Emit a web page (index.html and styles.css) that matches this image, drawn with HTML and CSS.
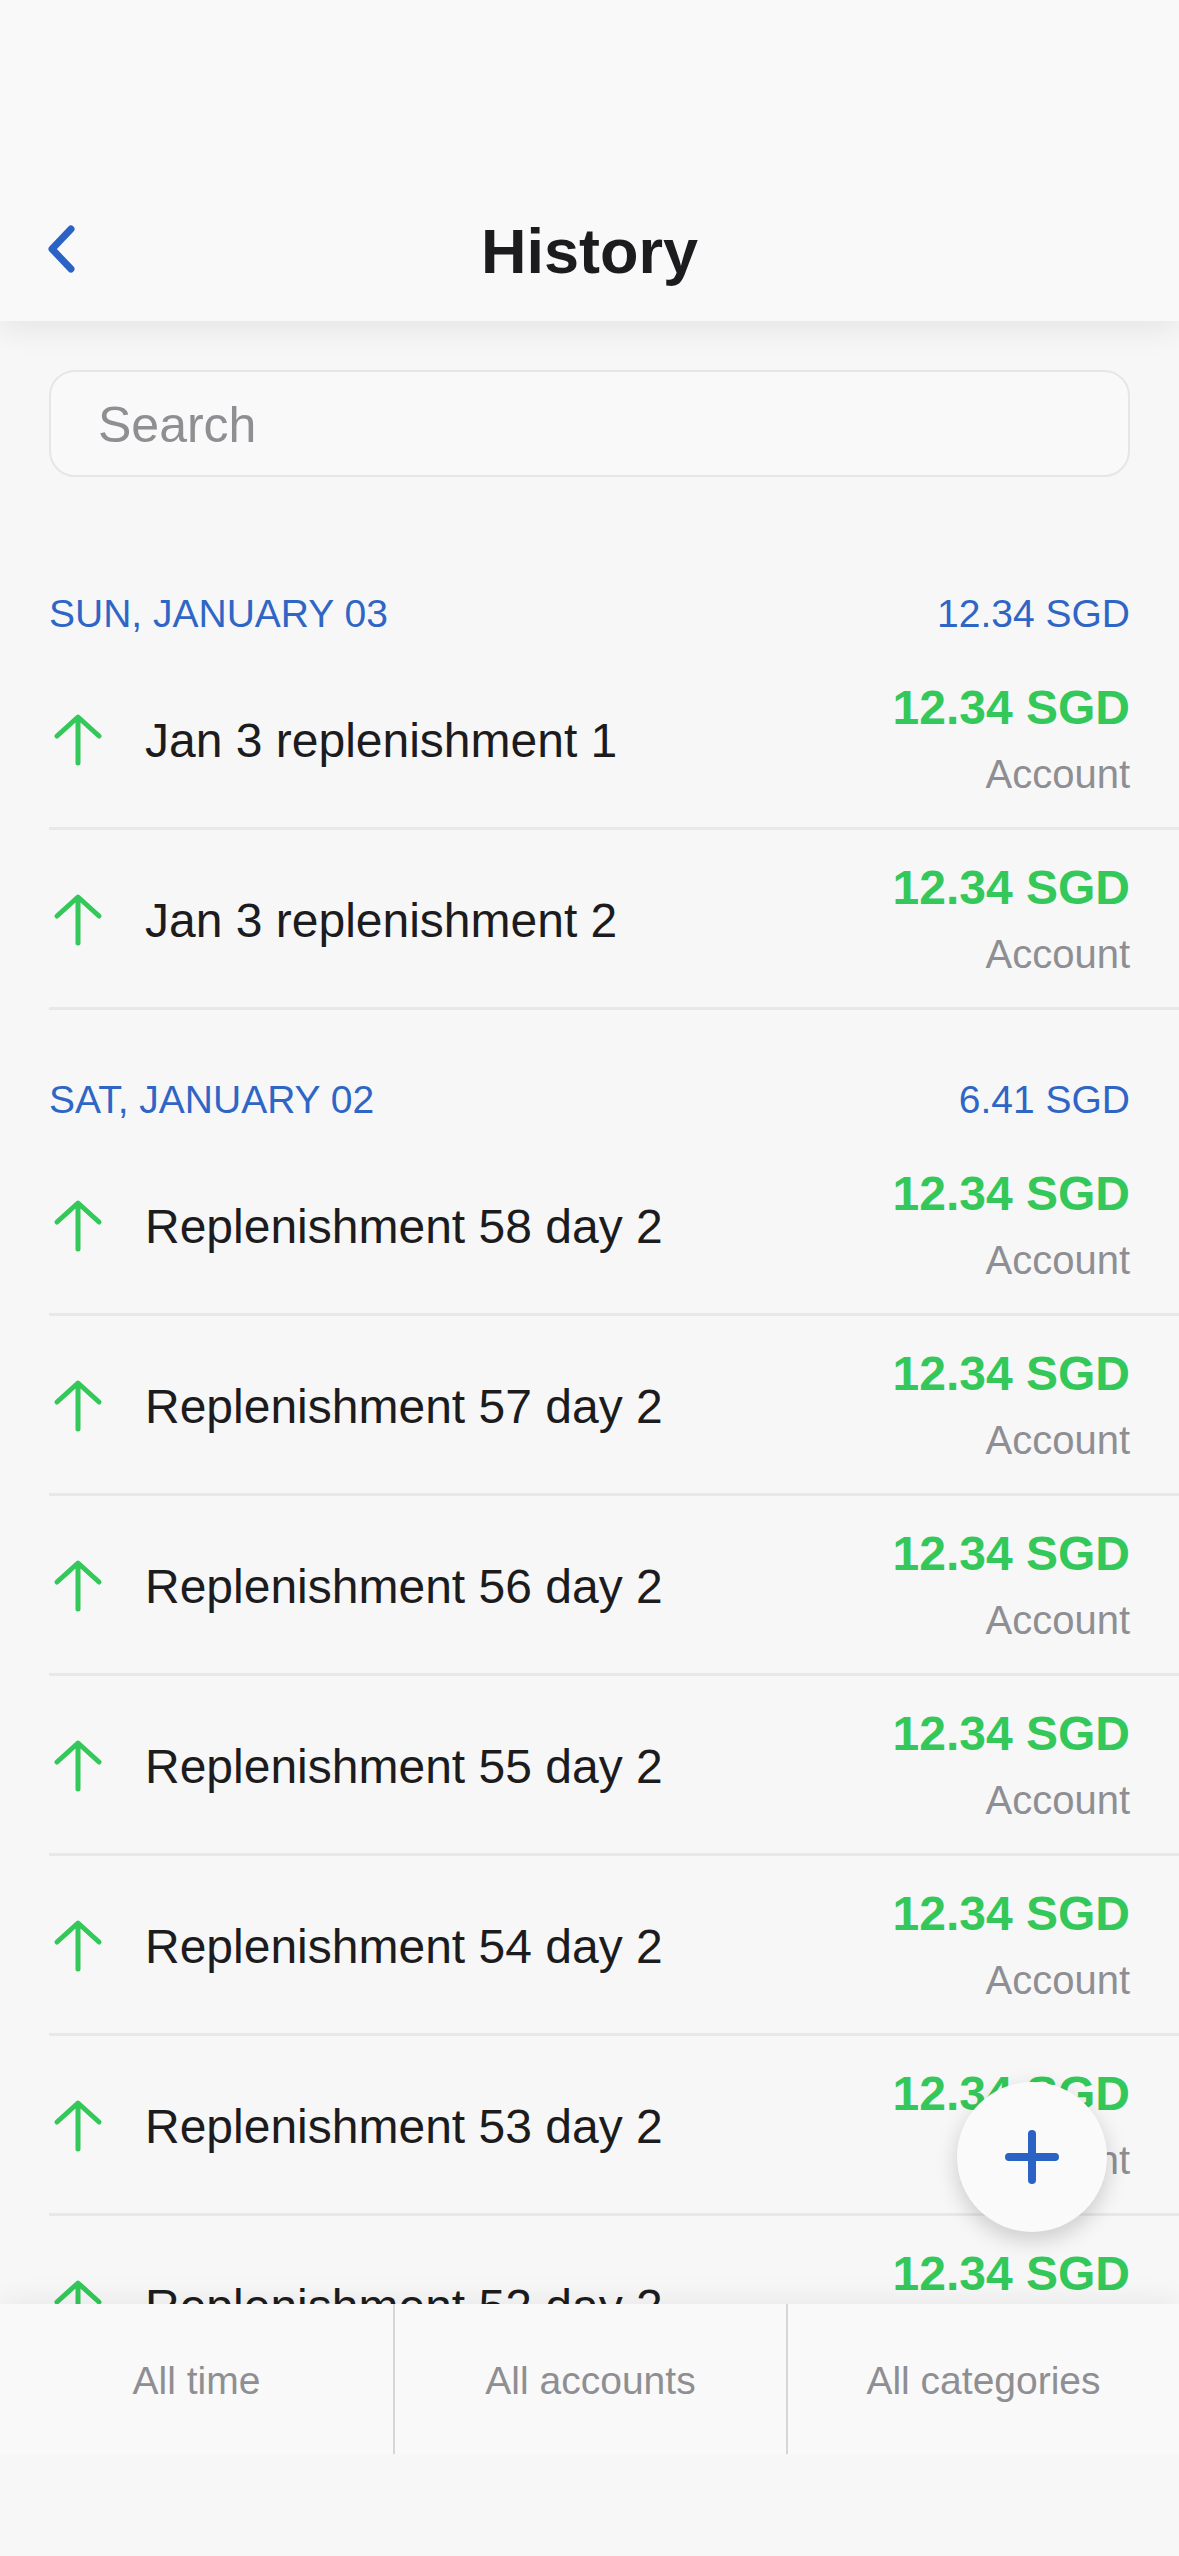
FILE: index.html
```html
<!DOCTYPE html>
<html lang="en">
<head>
<meta charset="utf-8">
<title>History</title>
<link rel="stylesheet" href="styles.css">
</head>
<body>
<div class="page">
  <header class="header">
    <div class="navbar">
      <div class="nav-left">
        <svg class="back" width="30" height="48" viewBox="0 0 30 48"><path d="M24 4 L5 24 L24 44" fill="none" stroke="#2b63c4" stroke-width="7" stroke-linecap="round" stroke-linejoin="round"/></svg>
      </div>
      <h1 class="title">History</h1>
      <div class="nav-right"></div>
    </div>
  </header>

  <main class="content">
    <div class="search">Search</div>

    <section class="day">
      <div class="day-head"><span>SUN, JANUARY 03</span><span>12.34 SGD</span></div>
      <div class="row">
        <div class="icon"><svg width="56" height="56" viewBox="0 0 56 56"><path d="M28 51 V6 M7 24 L28 5 L49 24" fill="none" stroke="#34c759" stroke-width="5" stroke-linecap="round" stroke-linejoin="round"/></svg></div>
        <div class="name">Jan 3 replenishment 1</div>
        <div class="right"><div class="amount">12.34 SGD</div><div class="account">Account</div></div>
      </div>
      <div class="row">
        <div class="icon"><svg width="56" height="56" viewBox="0 0 56 56"><path d="M28 51 V6 M7 24 L28 5 L49 24" fill="none" stroke="#34c759" stroke-width="5" stroke-linecap="round" stroke-linejoin="round"/></svg></div>
        <div class="name">Jan 3 replenishment 2</div>
        <div class="right"><div class="amount">12.34 SGD</div><div class="account">Account</div></div>
      </div>
    </section>

    <section class="day">
      <div class="day-head"><span>SAT, JANUARY 02</span><span>6.41 SGD</span></div>
      <div class="row">
        <div class="icon"><svg width="56" height="56" viewBox="0 0 56 56"><path d="M28 51 V6 M7 24 L28 5 L49 24" fill="none" stroke="#34c759" stroke-width="5" stroke-linecap="round" stroke-linejoin="round"/></svg></div>
        <div class="name">Replenishment 58 day 2</div>
        <div class="right"><div class="amount">12.34 SGD</div><div class="account">Account</div></div>
      </div>
      <div class="row">
        <div class="icon"><svg width="56" height="56" viewBox="0 0 56 56"><path d="M28 51 V6 M7 24 L28 5 L49 24" fill="none" stroke="#34c759" stroke-width="5" stroke-linecap="round" stroke-linejoin="round"/></svg></div>
        <div class="name">Replenishment 57 day 2</div>
        <div class="right"><div class="amount">12.34 SGD</div><div class="account">Account</div></div>
      </div>
      <div class="row">
        <div class="icon"><svg width="56" height="56" viewBox="0 0 56 56"><path d="M28 51 V6 M7 24 L28 5 L49 24" fill="none" stroke="#34c759" stroke-width="5" stroke-linecap="round" stroke-linejoin="round"/></svg></div>
        <div class="name">Replenishment 56 day 2</div>
        <div class="right"><div class="amount">12.34 SGD</div><div class="account">Account</div></div>
      </div>
      <div class="row">
        <div class="icon"><svg width="56" height="56" viewBox="0 0 56 56"><path d="M28 51 V6 M7 24 L28 5 L49 24" fill="none" stroke="#34c759" stroke-width="5" stroke-linecap="round" stroke-linejoin="round"/></svg></div>
        <div class="name">Replenishment 55 day 2</div>
        <div class="right"><div class="amount">12.34 SGD</div><div class="account">Account</div></div>
      </div>
      <div class="row">
        <div class="icon"><svg width="56" height="56" viewBox="0 0 56 56"><path d="M28 51 V6 M7 24 L28 5 L49 24" fill="none" stroke="#34c759" stroke-width="5" stroke-linecap="round" stroke-linejoin="round"/></svg></div>
        <div class="name">Replenishment 54 day 2</div>
        <div class="right"><div class="amount">12.34 SGD</div><div class="account">Account</div></div>
      </div>
      <div class="row">
        <div class="icon"><svg width="56" height="56" viewBox="0 0 56 56"><path d="M28 51 V6 M7 24 L28 5 L49 24" fill="none" stroke="#34c759" stroke-width="5" stroke-linecap="round" stroke-linejoin="round"/></svg></div>
        <div class="name">Replenishment 53 day 2</div>
        <div class="right"><div class="amount">12.34 SGD</div><div class="account">Account</div></div>
      </div>
      <div class="row">
        <div class="icon"><svg width="56" height="56" viewBox="0 0 56 56"><path d="M28 51 V6 M7 24 L28 5 L49 24" fill="none" stroke="#34c759" stroke-width="5" stroke-linecap="round" stroke-linejoin="round"/></svg></div>
        <div class="name">Replenishment 52 day 2</div>
        <div class="right"><div class="amount">12.34 SGD</div><div class="account">Account</div></div>
      </div>
    </section>
  </main>

  <button class="fab" type="button" aria-label="Add">
    <svg width="60" height="60" viewBox="0 0 60 60"><path d="M30 7 V53 M7 30 H53" fill="none" stroke="#2a63c3" stroke-width="8" stroke-linecap="round"/></svg>
  </button>

  <footer class="footer">
    <nav class="tabs">
      <div class="tab">All time</div>
      <div class="tab">All accounts</div>
      <div class="tab">All categories</div>
    </nav>
    <div class="home-area"></div>
  </footer>
</div>
</body>
</html>
```

FILE: styles.css
```css
* { box-sizing: border-box; }
html, body { margin: 0; padding: 0; }
body {
  width: 1179px;
  height: 2556px;
  background: #f7f7f7;
  font-family: "Liberation Sans", Arial, sans-serif;
  overflow: hidden;
}
.page {
  position: relative;
  width: 1179px;
  height: 2556px;
  display: flex;
  flex-direction: column;
  overflow: hidden;
}
.header {
  flex: 0 0 321px;
  background: #f9f9f9;
  padding-top: 160px;
  box-shadow: 0 10px 28px rgba(0,0,0,0.07);
  position: relative;
  z-index: 2;
}
.navbar {
  height: 161px;
  display: grid;
  grid-template-columns: 1fr auto 1fr;
  align-items: start;
}
.nav-left { padding-left: 47px; padding-top: 65px; }
.back { display: block; }
.title {
  margin: 0;
  padding-top: 53px;
  font-size: 63px;
  line-height: 76px;
  font-weight: bold;
  color: #1c1c1e;
}
.content {
  flex: 1 1 auto;
  overflow: hidden;
  padding-top: 49px;
  position: relative;
  z-index: 1;
}
.search {
  margin: 0 49px;
  height: 107px;
  border: 2px solid #e6e6e6;
  border-radius: 26px;
  background: #f9f9f9;
  padding-left: 47px;
  display: flex;
  align-items: center;
  font-size: 50px;
  color: #8e8e93;
  padding-top: 2px;
}
.day:first-of-type { margin-top: 47px; }
.day-head {
  height: 126px;
  padding: 0 49px 16px;
  display: flex;
  justify-content: space-between;
  align-items: flex-end;
  font-size: 39px;
  line-height: 40px;
  color: #2f66c6;
}
.row {
  margin-left: 49px;
  height: 180px;
  border-bottom: 3px solid #e8e8e8;
  display: flex;
  align-items: center;
  padding-right: 49px;
}
.icon {
  width: 96px;
  flex: 0 0 96px;
  display: flex;
  align-items: center;
  padding-top: 2px;
}
.icon svg { display: block; margin-left: 1px; }
.name {
  flex: 1 1 auto;
  font-size: 48px;
  line-height: 56px;
  color: #1c1c1e;
  padding-top: 4px;
}
.right {
  display: flex;
  flex-direction: column;
  align-items: flex-end;
  gap: 14px;
}
.amount {
  font-size: 48px;
  line-height: 56px;
  font-weight: bold;
  color: #34c759;
}
.account {
  font-size: 40px;
  line-height: 48px;
  color: #8e8e93;
}
.fab {
  position: absolute;
  left: 957px;
  top: 2082px;
  width: 150px;
  height: 150px;
  border-radius: 50%;
  border: none;
  padding: 0;
  background: #fafafa;
  box-shadow: 0 8px 22px rgba(0,0,0,0.18);
  display: flex;
  align-items: center;
  justify-content: center;
  z-index: 3;
}
.fab svg { display: block; }
.footer {
  flex: 0 0 252px;
  position: relative;
  z-index: 2;
  background: #f7f7f7;
}
.tabs {
  height: 150px;
  display: grid;
  grid-template-columns: 393px 393px 393px;
  background: #f9f9f9;
  box-shadow: 0 0 30px rgba(0,0,0,0.08);
}
.tab {
  display: flex;
  align-items: center;
  justify-content: center;
  font-size: 39px;
  color: #8e8e93;
  padding-top: 4px;
}
.tab + .tab { border-left: 2px solid #d6d6d6; }
.home-area { height: 102px; background: #f7f7f7; }
```
